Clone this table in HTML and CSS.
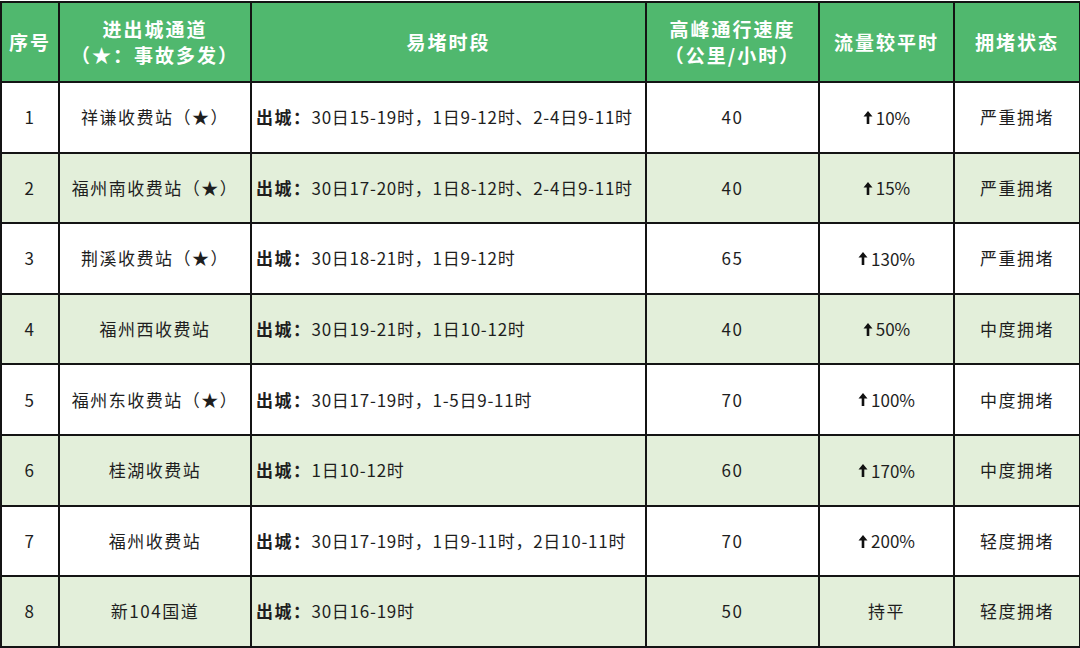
FILE: index.html
```html
<!DOCTYPE html>
<html lang="zh-CN">
<head>
<meta charset="utf-8">
<title>拥堵</title>
<link rel="stylesheet" href="styles.css">
</head>
<body>
<table class="grid">
  <colgroup>
    <col class="c1"><col class="c2"><col class="c3"><col class="c4"><col class="c5"><col class="c6">
  </colgroup>
  <thead>
    <tr class="head">
      <th>序号</th>
      <th>进出城通道<br>（★：事故多发）</th>
      <th>易堵时段</th>
      <th>高峰通行速度<br>（公里/小时）</th>
      <th>流量较平时</th>
      <th>拥堵状态</th>
    </tr>
  </thead>
  <tbody>
    <tr class="odd"><td>1</td><td>祥谦收费站（★）</td><td class="time"><b>出城：</b>30日15-19时，1日9-12时、2-4日9-11时</td><td>40</td><td><span class="up"><svg class="arr" viewBox="0 0 10 13"><path d="M5 0 L9.5 5.5 L6.3 5.5 L6.3 13 L3.7 13 L3.7 5.5 L0.5 5.5 Z"/></svg>10%</span></td><td>严重拥堵</td></tr>
    <tr class="even"><td>2</td><td>福州南收费站（★）</td><td class="time"><b>出城：</b>30日17-20时，1日8-12时、2-4日9-11时</td><td>40</td><td><span class="up"><svg class="arr" viewBox="0 0 10 13"><path d="M5 0 L9.5 5.5 L6.3 5.5 L6.3 13 L3.7 13 L3.7 5.5 L0.5 5.5 Z"/></svg>15%</span></td><td>严重拥堵</td></tr>
    <tr class="odd"><td>3</td><td>荆溪收费站（★）</td><td class="time"><b>出城：</b>30日18-21时，1日9-12时</td><td>65</td><td><span class="up"><svg class="arr" viewBox="0 0 10 13"><path d="M5 0 L9.5 5.5 L6.3 5.5 L6.3 13 L3.7 13 L3.7 5.5 L0.5 5.5 Z"/></svg>130%</span></td><td>严重拥堵</td></tr>
    <tr class="even"><td>4</td><td>福州西收费站</td><td class="time"><b>出城：</b>30日19-21时，1日10-12时</td><td>40</td><td><span class="up"><svg class="arr" viewBox="0 0 10 13"><path d="M5 0 L9.5 5.5 L6.3 5.5 L6.3 13 L3.7 13 L3.7 5.5 L0.5 5.5 Z"/></svg>50%</span></td><td>中度拥堵</td></tr>
    <tr class="odd"><td>5</td><td>福州东收费站（★）</td><td class="time"><b>出城：</b>30日17-19时，1-5日9-11时</td><td>70</td><td><span class="up"><svg class="arr" viewBox="0 0 10 13"><path d="M5 0 L9.5 5.5 L6.3 5.5 L6.3 13 L3.7 13 L3.7 5.5 L0.5 5.5 Z"/></svg>100%</span></td><td>中度拥堵</td></tr>
    <tr class="even"><td>6</td><td>桂湖收费站</td><td class="time"><b>出城：</b>1日10-12时</td><td>60</td><td><span class="up"><svg class="arr" viewBox="0 0 10 13"><path d="M5 0 L9.5 5.5 L6.3 5.5 L6.3 13 L3.7 13 L3.7 5.5 L0.5 5.5 Z"/></svg>170%</span></td><td>中度拥堵</td></tr>
    <tr class="odd"><td>7</td><td>福州收费站</td><td class="time"><b>出城：</b>30日17-19时，1日9-11时，2日10-11时</td><td>70</td><td><span class="up"><svg class="arr" viewBox="0 0 10 13"><path d="M5 0 L9.5 5.5 L6.3 5.5 L6.3 13 L3.7 13 L3.7 5.5 L0.5 5.5 Z"/></svg>200%</span></td><td>轻度拥堵</td></tr>
    <tr class="even"><td>8</td><td>新104国道</td><td class="time"><b>出城：</b>30日16-19时</td><td>50</td><td>持平</td><td>轻度拥堵</td></tr>
  </tbody>
</table>
</body>
</html>
```
FILE: styles.css
```css
html, body {
  margin: 0;
  padding: 0;
  background: #ffffff;
}
body {
  font-family: "Noto Sans CJK SC", "Microsoft YaHei", sans-serif;
  color: #1e1e1e;
}
.grid {
  border-collapse: collapse;
  table-layout: fixed;
  width: 1079px;
  margin: 1px 0 0 0;
}
.c1 { width: 58px; }
.c2 { width: 192px; }
.c3 { width: 395px; }
.c4 { width: 173px; }
.c5 { width: 135px; }
.c6 { width: 126px; }
.grid th, .grid td {
  border: 2px solid #141414;
  padding: 0;
  text-align: center;
  vertical-align: middle;
}
.head {
  height: 80px;
  background: #50b86e;
}
.head th {
  color: #ffffff;
  font-size: 19px;
  font-weight: 700;
  letter-spacing: 2px;
  line-height: 26px;
}
tbody tr {
  height: 70.6px;
}
tbody td {
  font-size: 17px;
  letter-spacing: 1.5px;
  line-height: 20px;
}
.odd { background: #ffffff; }
.even { background: #e3efda; }
.grid td.time {
  text-align: left;
  padding-left: 4px;
  letter-spacing: 0.75px;
  white-space: nowrap;
}
.time b { font-weight: 700; letter-spacing: 1.5px; }
.up {
  display: inline-flex;
  align-items: center;
  gap: 3px;
  letter-spacing: 0;
}
.arr {
  width: 10px;
  height: 13px;
  fill: #111111;
}
```
